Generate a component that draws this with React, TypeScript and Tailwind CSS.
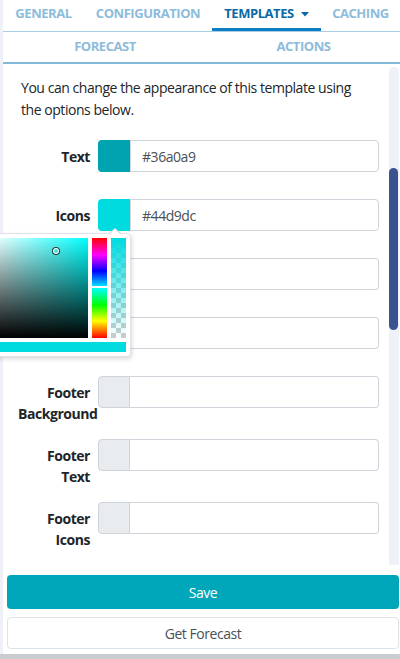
function Caret() {
  return (
    <svg width="8" height="5" viewBox="0 0 8 5" className="ml-[7px] mt-[1px]">
      <path d="M0 0 L8 0 L4 4.5 Z" fill="currentColor" />
    </svg>
  );
}

type Row = { label: string[]; color?: string; value?: string };

const rows: Row[] = [
  { label: ["Text"], color: "#00a4b0", value: "#36a0a9" },
  { label: ["Icons"], color: "#00dbe0", value: "#44d9dc" },
  { label: ["Header"] },
  { label: ["Border"] },
  { label: ["Footer", "Background"] },
  { label: ["Footer", "Text"] },
  { label: ["Footer", "Icons"] },
];

function ColorPicker() {
  return (
    <div className="absolute left-[-115px] top-[34px] z-10">
      {/* arrow */}
      <div className="absolute left-[126px] top-[-5px] h-0 w-0 border-x-[6px] border-b-[5px] border-x-transparent border-b-[#d6dadf]" />
      <div className="absolute left-[127px] top-[-4px] h-0 w-0 border-x-[5px] border-b-[5px] border-x-transparent border-b-white" />
      <div className="rounded-[4px] border border-[#dfe3e7] bg-white p-[4px] shadow-[1px_2px_4px_rgba(0,0,0,0.15)]">
        <div className="flex gap-[4px]">
          <div className="relative h-[100px] w-[100px] bg-[#00ffff]">
            <div className="absolute inset-0 bg-[linear-gradient(to_right,#fff,rgba(255,255,255,0))]" />
            <div className="absolute inset-0 bg-[linear-gradient(to_bottom,rgba(0,0,0,0),#000)]" />
            <div className="absolute left-[65px] top-[10px] h-[6px] w-[6px] rounded-full border border-white shadow-[0_0_0_1px_#333]" />
          </div>
          <div className="relative h-[100px] w-[15px] bg-[linear-gradient(to_bottom,#f00_0%,#f0f_17%,#00f_33%,#0ff_50%,#0f0_67%,#ff0_83%,#f00_100%)]">
            <div className="absolute left-0 right-0 top-[48px] h-[2px] bg-white" />
          </div>
          <div className="relative h-[100px] w-[15px] bg-[conic-gradient(#ccc_25%,#fff_0_50%,#ccc_0_75%,#fff_0)] bg-[length:10px_10px]">
            <div className="absolute inset-0 bg-[linear-gradient(to_bottom,#00dbe0,rgba(0,219,224,0))]" />
          </div>
        </div>
        <div className="mt-[4px] h-[10px] w-[138px] bg-[#00dbe0]" />
      </div>
    </div>
  );
}

export default function App() {
  return (
    <div className="relative h-[659px] w-[400px] overflow-hidden bg-[#eef1f8] pl-[3px] font-['Open_Sans','Noto_Sans',sans-serif] tracking-[-0.45px] text-[#212529]">
      <div className="flex h-full flex-col bg-white">
        {/* tabs */}
        <nav className="text-[13px] font-bold uppercase">
          <div className="flex h-[32px] border-b border-[#a7cee5]">
            <div className="flex w-[81px] items-center justify-center pb-[3px] text-[#8dbcdb]">General</div>
            <div className="flex w-[128px] items-center justify-center pb-[3px] text-[#8dbcdb]">Configuration</div>
            <div className="flex w-[109px] items-center justify-center border-b-[3px] border-[#0b7fc1] text-[#0a69a4]">
              Templates
              <Caret />
            </div>
            <div className="flex flex-1 items-center justify-center pb-[3px] text-[#8dbcdb]">Caching</div>
          </div>
          <div className="flex h-[32px] border-b-2 border-[#84b9d9] text-[#8dbcdb]">
            <div className="flex w-[204px] items-center justify-center">Forecast</div>
            <div className="flex flex-1 items-center justify-center">Actions</div>
          </div>
        </nav>

        {/* scrollable content */}
        <div className="relative h-[501px]">
          <div className="pl-[18px] pr-[20px] pt-[13px]">
            <p className="pr-[15px] text-[14px] leading-[22px]">
              You can change the appearance of this template using the options below.
            </p>
            <div className="mt-[19px] text-[14px]">
              {rows.map((row, i) => (
                <div key={i} className="relative ml-[-3px] flex min-h-[59px] items-start">
                  <div className="w-[72px] pb-[15px] pt-[6px] text-right font-bold leading-[21px]">
                    {row.label.map((l) => (
                      <div key={l}>{l}</div>
                    ))}
                  </div>
                  <div className="relative ml-[8px] flex h-[32px] w-[281px]">
                    {row.color ? (
                      <div
                        className="h-[32px] w-[32px] shrink-0 rounded-l-[4px]"
                        style={{ backgroundColor: row.color }}
                      />
                    ) : (
                      <div className="h-[32px] w-[32px] shrink-0 rounded-l-[4px] border border-[#ced4da] bg-[#e9ecef]" />
                    )}
                    <div className={`flex flex-1 items-center rounded-r-[4px] border border-[#ced4da] pl-[11px] text-[#495057] ${row.color ? "" : "border-l-0"}`}>
                      {row.value}
                    </div>
                    {i === 1 && <ColorPicker />}
                  </div>
                </div>
              ))}
            </div>
          </div>
          {/* scrollbar */}
          <div className="absolute right-[1px] top-[3px] bottom-0 w-[10px] rounded-t-[5px] bg-[#eef1f8]">
            <div className="absolute left-0 right-[1px] top-[101px] h-[162px] rounded-[5px] bg-[#3b5291]" />
          </div>
        </div>

        {/* actions */}
        <div className="flex flex-col gap-[8px] pl-[4px] pr-[1px] pt-[10px] text-[14px]">
          <button className="h-[34px] rounded-[4px] bg-[#00a6b9] text-white">Save</button>
          <button className="h-[32px] rounded-[4px] border border-[#dfe3e6] bg-white text-[#495057]">Get Forecast</button>
        </div>
      </div>
      <div className="absolute bottom-0 left-0 right-0 h-[5px] bg-[#c8cdd1]" />
    </div>
  );
}
